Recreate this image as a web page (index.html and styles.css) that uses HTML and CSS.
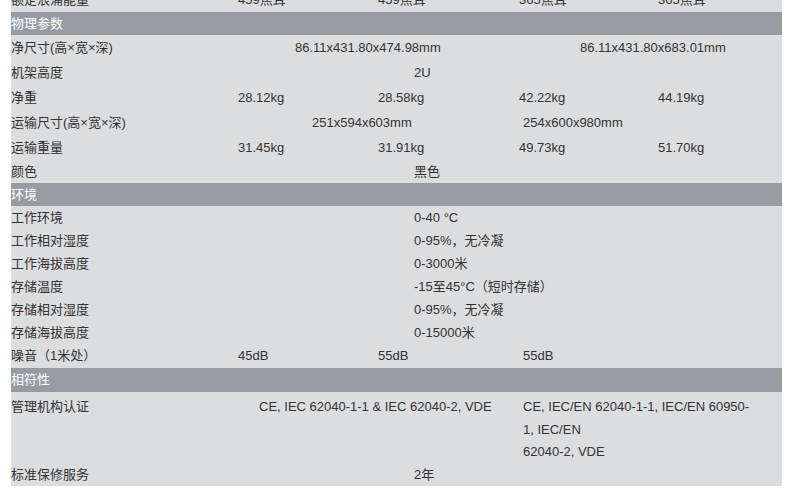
FILE: index.html
```html
<!DOCTYPE html>
<html lang="zh-CN">
<head>
    <meta charset="UTF-8">
    <meta name="viewport" content="width=device-width, initial-scale=1.0">
    <title>规格参数</title>
    <link rel="stylesheet" href="styles.css">
</head>
<body>
    <table class="spec">
        <colgroup>
            <col class="col-label">
            <col class="col-a">
            <col class="col-b">
            <col class="col-c">
            <col class="col-d">
        </colgroup>
        <tr class="tall">
            <td class="label">额定浪涌能量</td>
            <td>459焦耳</td>
            <td>459焦耳</td>
            <td>365焦耳</td>
            <td>365焦耳</td>
        </tr>

        <tr class="section"><td colspan="5">物理参数</td></tr>
        <tr class="tall">
            <td class="label">净尺寸(高×宽×深)</td>
            <td colspan="2" class="dim-left">86.11x431.80x474.98mm</td>
            <td colspan="2" class="dim-right">86.11x431.80x683.01mm</td>
        </tr>
        <tr class="tall">
            <td class="label">机架高度</td>
            <td colspan="4" class="wide">2U</td>
        </tr>
        <tr class="tall">
            <td class="label">净重</td>
            <td>28.12kg</td>
            <td>28.58kg</td>
            <td>42.22kg</td>
            <td>44.19kg</td>
        </tr>
        <tr class="tall">
            <td class="label">运输尺寸(高×宽×深)</td>
            <td colspan="2" class="ship-left">251x594x603mm</td>
            <td colspan="2" class="pair">254x600x980mm</td>
        </tr>
        <tr class="tall">
            <td class="label">运输重量</td>
            <td>31.45kg</td>
            <td>31.91kg</td>
            <td>49.73kg</td>
            <td>51.70kg</td>
        </tr>
        <tr>
            <td class="label">颜色</td>
            <td colspan="4" class="wide">黑色</td>
        </tr>

        <tr class="section"><td colspan="5">环境</td></tr>
        <tr>
            <td class="label">工作环境</td>
            <td colspan="4" class="wide">0-40 °C</td>
        </tr>
        <tr>
            <td class="label">工作相对湿度</td>
            <td colspan="4" class="wide">0-95%，无冷凝</td>
        </tr>
        <tr>
            <td class="label">工作海拔高度</td>
            <td colspan="4" class="wide">0-3000米</td>
        </tr>
        <tr>
            <td class="label">存储温度</td>
            <td colspan="4" class="wide">-15至45°C（短时存储）</td>
        </tr>
        <tr>
            <td class="label">存储相对湿度</td>
            <td colspan="4" class="wide">0-95%，无冷凝</td>
        </tr>
        <tr>
            <td class="label">存储海拔高度</td>
            <td colspan="4" class="wide">0-15000米</td>
        </tr>
        <tr class="mid">
            <td class="label">噪音（1米处）</td>
            <td>45dB</td>
            <td>55dB</td>
            <td colspan="2" class="pair">55dB</td>
        </tr>

        <tr class="section mid"><td colspan="5">相符性</td></tr>
        <tr class="cert">
            <td class="label">管理机构认证</td>
            <td colspan="2" class="cert-left">CE, IEC 62040-1-1 &amp; IEC 62040-2, VDE</td>
            <td colspan="2" class="pair cert-right">CE, IEC/EN 62040-1-1, IEC/EN 60950-1, IEC/EN<br>62040-2, VDE</td>
        </tr>
        <tr class="short">
            <td class="label">标准保修服务</td>
            <td colspan="4" class="wide">2年</td>
        </tr>
    </table>
</body>
</html>
```

FILE: styles.css
```css
body {
    margin: 0;
    background-color: #fff;
    font-family: "Liberation Sans", Arial, "Noto Sans CJK SC", sans-serif;
    font-size: 13px;
    color: #333;
}
.spec {
    width: 771px;
    margin: -13px 0 0 11px;
    border-collapse: collapse;
    table-layout: fixed;
    background-color: #dcdddf;
}
.col-label { width: 221px; }
.col-a { width: 140px; }
.col-b { width: 141px; }
.col-c { width: 139px; }
.col-d { width: 130px; }

.spec td {
    padding: 0 0 0 6px;
    height: 23px;
    line-height: 16px;
    vertical-align: middle;
    white-space: nowrap;
}
.spec tr.tall td { height: 25px; }
.spec tr.mid td { height: 24px; }
.spec tr.short td { height: 22px; }

.spec td.label {
    padding-left: 0;
}
.spec tr.section td {
    padding-left: 0;
    background-color: #979ca4;
    color: #fff;
}

/* hand-placed spanning cells */
.spec td.dim-left { padding-left: 63px; }
.spec td.dim-right { padding-left: 67px; }
.spec td.ship-left { padding-left: 80px; }
.spec td.pair { padding-left: 10px; }
.spec td.wide { padding-left: 182px; }
.spec td.cert-left { padding-left: 27px; }

.spec tr.cert td {
    vertical-align: top;
    padding-top: 4px;
    line-height: 22.5px;
    height: auto;
}
.spec td.cert-right {
    white-space: normal;
    padding-right: 28px;
}
```
